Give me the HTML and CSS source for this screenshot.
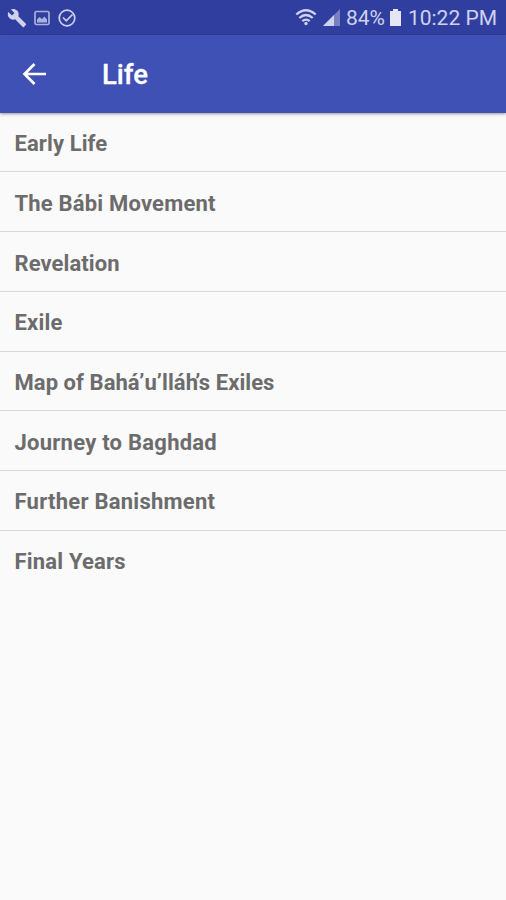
FILE: index.html
```html
<!DOCTYPE html>
<html lang="en">
<head>
<meta charset="utf-8">
<title>Life</title>
<link rel="stylesheet" href="styles.css">
</head>
<body>
<div class="status">
  <div class="notifications">
    <svg width="20" height="20" viewBox="0 0 24 24"><path fill="currentColor" d="M22.700 19l-9.100-9.100c.9-2.300.4-5-1.500-6.900-2-2-5-2.400-7.400-1.300L9 6 6 9 1.600 4.700C.4 7.100.9 10.100 2.900 12.100c1.900 1.900 4.600 2.400 6.900 1.500l9.100 9.100c.4.4 1 .4 1.400 0l2.300-2.300c.5-.4.5-1.100.1-1.400z"/></svg>
    <svg class="picture" width="16" height="16" viewBox="0 0 16 16"><rect x="1" y="1.500" width="14" height="13" rx="1.500" fill="none" stroke="currentColor" stroke-width="1.700"/><path fill="currentColor" d="M3 12.500V9.500L5.500 7l2.500 2L10.500 6.500 13 9.500v3z"/></svg>
    <svg width="18" height="18" viewBox="0 0 18 18" fill="none" stroke="currentColor" stroke-width="1.700"><circle cx="9" cy="9" r="7.800"/><path d="M5 8.500l3.300 3.300L14.500 5.500"/></svg>
  </div>
  <div class="system">
    <svg class="wifi" width="22" height="18" viewBox="0 0 22 18" fill="none" stroke="currentColor" stroke-width="2.200"><path d="M1.300 6.500Q11-2 20.700 6.500M4.300 10Q11 4 17.700 10M7.300 13.200Q11 10 14.700 13.200"/><circle cx="11" cy="15.500" r="1.700" fill="currentColor" stroke="none"/></svg>
    <svg class="signal" width="17" height="17" viewBox="0 0 17 17"><path fill="currentColor" opacity=".45" d="M17 0v17H0z"/><path fill="currentColor" d="M11 6v11H0z"/></svg>
    <span class="percent">84%</span>
    <svg class="battery" width="11" height="17" viewBox="0 0 11 17"><path fill="currentColor" d="M3 0h5v2h3v15H0V2h3z"/></svg>
    <span class="clock">10:22 PM</span>
  </div>
</div>
<header class="appbar">
  <svg width="24" height="24" viewBox="0 0 24 24" fill="none" stroke="currentColor" stroke-width="2.700"><path d="M24 12H2.500M12.500 2L2.500 12l10 10"/></svg>
  <h1>Life</h1>
</header>
<ul class="list">
  <li>Early Life</li>
  <li>The Bábi Movement</li>
  <li>Revelation</li>
  <li>Exile</li>
  <li class="narrow">Map of Bahá’u’llá<span class="tight">h’</span>s Exiles</li>
  <li>Journey to Baghdad</li>
  <li>Further Banishment</li>
  <li>Final Years</li>
</ul>
</body>
</html>
```
FILE: styles.css
```css
body { margin: 0; min-height: 900px; background: #fafafa; font-family: Roboto, sans-serif; }
svg { display: block; flex: none; }
.status { height: 35px; box-sizing: border-box; padding: 0 9px 0 7px; background: #303f9f; color: #ced2ee; display: flex; justify-content: space-between; align-items: center; }
.notifications { display: flex; align-items: center; gap: 8px; }
.notifications .picture { color: #a9b1dc; margin-left: -1px; }
.system { display: flex; align-items: center; font-size: 21px; white-space: nowrap; }
.wifi { margin-top: -1px; }
.signal { margin-left: 6px; }
.percent { margin-left: 6px; }
.battery { margin-left: 5px; color: #e4e6f6; }
.clock { margin-left: 7px; }
.appbar { height: 78px; box-sizing: border-box; padding-left: 22px; display: flex; align-items: center; gap: 56px; background: #3f51b5; color: #fff; box-shadow: 0 1px 3px rgba(0,0,0,.4); }
h1 { margin: 0; padding-top: 1px; font-size: 27.500px; font-weight: 500; -webkit-text-stroke: .3px currentColor; }
.list { margin: 0; padding: 0; list-style: none; }
.list li { height: 59.800px; box-sizing: border-box; padding: 3px 15px 0 14.500px; display: flex; align-items: center; border-bottom: 1px solid #d8d8d8; font-size: 22px; font-weight: 700; letter-spacing: .19px; color: #6c6c6c; white-space: pre; }
.list li:first-child { height: 59.200px; padding-top: 2px; letter-spacing: .1px; }
.list li:nth-child(3) { padding-top: 4px; letter-spacing: .08px; }
.list li:nth-child(6), .list li:nth-child(7) { letter-spacing: .25px; }
.list li:nth-child(7), .list li:last-child { padding-top: 2px; }
.list li:last-child { border-bottom: 0; }
.list .narrow { letter-spacing: .06px; }
.tight { letter-spacing: -1.600px; }
```
